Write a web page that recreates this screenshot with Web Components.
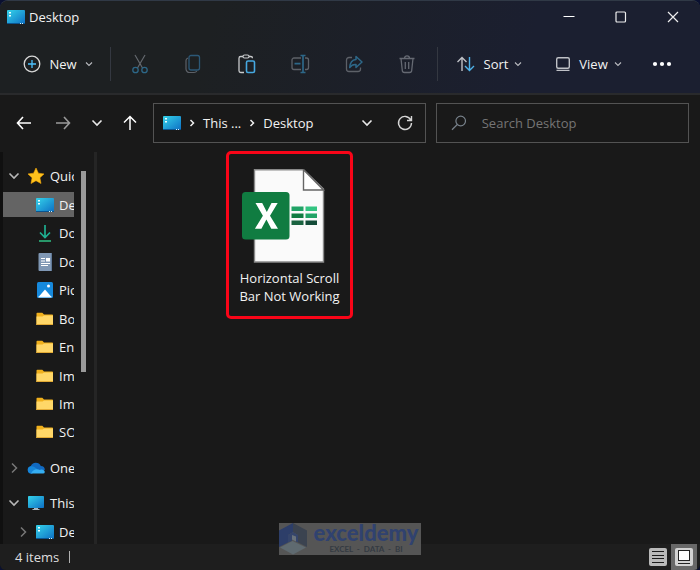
<!DOCTYPE html>
<html lang="en">
<head>
<meta charset="utf-8">
<title>Desktop</title>
<style>
html, body { margin: 0; height: 100%; background: #0a1030; }
body { font: 13px/18px "Open Sans", "Noto Sans", sans-serif; color: #f2f2f2; }
</style>
</head>
<body>
<file-explorer></file-explorer>
<script>
const SCREEN = `<defs><linearGradient id="g" x1="0" y1="0" x2="1" y2="1"><stop offset="0" stop-color="#35d3ea"/><stop offset="1" stop-color="#0d6fc4"/></linearGradient></defs>`;
const ICONS = {
  desktop: [18, 14, SCREEN + `<rect width="18" height="14" rx="1" fill="url(#g)"/><path d="M2 2h2v1.500H2zM2 5h2v1.500H2z" fill="#eaffff"/><path d="M0 13h18v.5a.5.500 0 0 1-.5.500H.5a.5.500 0 0 1-.5-.5z" fill="#0b5590"/><path d="M13 13h1v1h-1zM15 13h1v1h-1z" fill="#d8f4ff"/>`],
  plus: [18, 18, `<circle cx="9" cy="9" r="7.800" stroke="#d8d8d8" stroke-width="1.300"/><path d="M9 5v8M5 9h8" stroke="#4cc2ff" stroke-width="1.300"/>`],
  small: [8, 8, `<path d="M1 2.500l3 3 3-3" stroke="#b9bbc0" stroke-width="1.100"/>`],
  cut: [18, 20, `<path d="M4 1l7.500 13M14 1L6.500 14" stroke="#63676d" stroke-width="1.200"/><circle cx="4.500" cy="16" r="2.700" stroke="#2d6788" stroke-width="1.300"/><circle cx="13.500" cy="16" r="2.700" stroke="#2d6788" stroke-width="1.300"/>`],
  copy: [18, 20, `<path d="M4 4C2.700 4.500 2 5.200 2 6.500V15a3.500 3.500 0 0 0 3.500 3.500H10c1.300 0 2.300-.6 2.800-1.500" stroke="#5d6168" stroke-width="1.200"/><rect x="5" y="1.500" width="10.500" height="14.500" rx="2" stroke="#2c5877" stroke-width="1.300"/>`],
  paste: [18, 20, `<path d="M5 2.500H2.700A1.700 1.700 0 0 0 1 4.200v12.600a1.700 1.700 0 0 0 1.700 1.700H6M11 2.500h1.800a1.700 1.700 0 0 1 1.700 1.700" stroke="#c8cacc" stroke-width="1.300"/><rect x="5" y="1" width="6" height="3" rx="1.500" stroke="#c8cacc" stroke-width="1.200"/><rect x="8.500" y="7" width="8" height="11.500" rx="1.500" stroke="#46a8e0" stroke-width="1.600"/>`],
  rename: [20, 20, `<path d="M11 4H4a2 2 0 0 0-2 2v7.500a2 2 0 0 0 2 2h7M15 4h1.500a2 2 0 0 1 2 2v7.500a2 2 0 0 1-2 2H15" stroke="#5d6168" stroke-width="1.300"/><path d="M4.500 9.700h6M13 2v16.500M10.500 1.500h5M10.500 18.500h5" stroke="#2d6788" stroke-width="1.700"/>`],
  share: [20, 20, `<path d="M8 3.500H5a2.500 2.500 0 0 0-2.500 2.500v9A2.500 2.500 0 0 0 5 17.500h9a2.500 2.500 0 0 0 2.500-2.500v-1.500" stroke="#5d6168" stroke-width="1.300"/><path d="M12 2.500L18 8l-6 5.500v-3c-3-.2-4.800.7-6.300 3C6 9 8.500 5.800 12 5.500z" stroke="#2d6788" stroke-width="1.500" stroke-linejoin="round"/>`],
  trash: [18, 20, `<path d="M1.500 4.500h15M6.500 4.500C6.500 1 11.500 1 11.500 4.500M3 4.500l1.300 12A2.200 2.200 0 0 0 6.500 18.500h5a2.200 2.200 0 0 0 2.200-2L15 4.500M7.300 8v7M10.700 8v7" stroke="#656972" stroke-width="1.300"/>`],
  sort: [20, 16, `<path d="M6 15V1.500M1.500 6L6 1.500 10.500 6" stroke="#bfc1c6" stroke-width="1.400"/><path d="M13.500 1v13.500M9 10l4.500 4.500L18 10" stroke="#4fb3ea" stroke-width="1.400"/>`],
  view: [16, 16, `<rect x="1.700" y="1.700" width="12.600" height="10.600" rx="1.500" stroke="#bfc1c6" stroke-width="1.400"/><path d="M1.500 14.300h13" stroke="#bfc1c6" stroke-width="1.300"/>`],
  more: [20, 6, `<g fill="#fff"><circle cx="3" cy="3" r="2.100"/><circle cx="10" cy="3" r="2.100"/><circle cx="17" cy="3" r="2.100"/></g>`],
  min: [12, 12, `<path d="M.5 5.500h11" stroke="#fff" stroke-width="1.100"/>`],
  max: [12, 12, `<rect x="1" y="1" width="9.500" height="10" rx="1" stroke="#eee" stroke-width="1.200"/>`],
  close: [12, 12, `<path d="M1 1l10 10M11 1L1 11" stroke="#eee" stroke-width="1.200"/>`],
  back: [16, 14, `<path d="M15 7H1.500M7 1L1.500 7 7 13" stroke="#fff" stroke-width="1.600"/>`],
  forward: [16, 14, `<path d="M1 7h13.500M9 1l5.500 6L9 13" stroke="#9a9a9a" stroke-width="1.600"/>`],
  up: [16, 16, `<path d="M8 15V1.500M2 7.500l6-6 6 6" stroke="#fff" stroke-width="1.500"/>`],
  down: [12, 8, `<path d="M1.500 1.500L6 6l4.500-4.500" stroke="#e8e8e8" stroke-width="1.600"/>`],
  right: [6, 8, `<path d="M1.500 1l3 3-3 3" stroke="#f0f0f0" stroke-width="1.500"/>`],
  refresh: [16, 16, `<path d="M13.700 4.800A6.500 6.500 0 1 0 14.500 8M14.500 1v4.500H10" stroke="#d5d5d5" stroke-width="1.400"/>`],
  search: [16, 16, `<circle cx="9.700" cy="6" r="4.800" stroke="#77818a" stroke-width="1.200"/><path d="M6.300 9.500L1 14.700" stroke="#77818a" stroke-width="1.200"/>`],
  open: [12, 8, `<path d="M1.500 1.500L6 6l4.500-4.500" stroke="#b8b8b8" stroke-width="1.600"/>`],
  shut: [12, 12, `<path d="M4 1.500L8.500 6 4 10.500" stroke="#777" stroke-width="1.500"/>`],
  star: [18, 18, `<path d="M9 1l2.400 5.200 5.600.7-4.100 3.900 1.100 5.700L9 13.700 4 16.500l1.100-5.700L1 6.900l5.600-.7z" fill="#ffc21c" stroke="#f5a70a" stroke-width=".6" stroke-linejoin="round"/>`],
  download: [18, 18, `<path d="M9 1v12M4 8.500l5 5 5-5" stroke="#1fae91" stroke-width="1.700"/><path d="M3 17h12" stroke="#2ec184" stroke-width="1.500"/>`],
  document: [18, 18, `<rect x="2.500" width="13.500" height="18" rx="1" fill="#7f97b4"/><path d="M15 0h1v18h-1z" fill="#5f7896"/><path d="M5 5.500h4M5 8h4M5 10.500h9M5 12.500h7" stroke="#fff" stroke-width="1.200"/><rect x="10" y="5" width="4" height="3.500" fill="#fff"/>`],
  picture: [18, 18, `<rect x="1" y="1" width="16" height="16" rx="1.500" fill="#1689dc"/><path d="M2.500 16L9 8.500l6.500 7.500z" fill="#fff"/><path d="M2.500 16h13" stroke="#d7efff"/><circle cx="12.500" cy="5" r="1.500" fill="#fff"/>`],
  folder: [18, 14, `<path d="M.5 1.500a.8.800 0 0 1 .8-.8h5l1.700 1.800h8.200a.8.800 0 0 1 .8.800V13H.5z" fill="#f0b01c"/><path d="M.5 4.500h6L8 3.500h9V12.500a.5.500 0 0 1-.5.500H1a.5.500 0 0 1-.5-.5z" fill="#ffd768"/><path d="M.5 12.500h16.500" stroke="#e2aa35"/>`],
  cloud: [18, 12, `<path d="M4 11.500a3.700 3.700 0 0 1-.3-7.300A5.500 5.500 0 0 1 13.800 4a4 4 0 0 1 4 4z" fill="#1169c0"/><path d="M3.800 4.200c3-.2 4.800 1.700 6.700 3L5 11.500H4a3.700 3.700 0 0 1-.2-7.300z" fill="#1686d9"/><path d="M4 11.500c1.500-3.500 5-5.400 9-3.600 2-1 4.800.2 4.800 2a1.700 1.700 0 0 1-1.700 1.600z" fill="#35aef2"/>`],
  monitor: [18, 14, SCREEN + `<rect x="1" width="16" height="12" rx=".8" fill="url(#g)"/><path d="M7 12h4v1h1.500v1h-7v-1H7z" fill="#a9b6bd"/>`],
  list: [18, 18, `<rect width="18" height="18" rx="2" fill="#b9b9b9"/><path d="M3 3.500h12M3 7.500h12M3 10.500h12M3 14.500h12" stroke="#1b1b1b"/>`],
  tiles: [18, 18, `<rect width="18" height="18" rx="2" fill="#d2d2d2"/><rect x="3.500" y="2.500" width="11" height="10" fill="#fff" stroke="#222"/><path d="M3 15.500h12" stroke="#222"/>`],
  excel: [84, 94, `<path d="M12.500.8h49L81.500 20v73h-69z" fill="#fafafa" stroke="#8a8a8a" stroke-width="1.400"/><path d="M61.500.8V21h20z" fill="#fff" stroke="#666" stroke-width="1.400"/><path fill="#21a366" d="M49.500 37.500h12v4.500h-12zM63.500 44.500H75V49H63.500z"/><path fill="#33c481" d="M63.500 37.500H75V42H63.500z"/><path fill="#107c41" d="M49.500 44.500h12V49h-12z"/><path fill="#1b6340" d="M49.500 51.500h12V56h-12z"/><path fill="#134b38" d="M63.500 51.500H75V56H63.500z"/><rect y="23" width="47.500" height="47.500" rx="3.500" fill="#107c41"/><path d="M13.500 34h6.700l4.600 9 4.700-9h6.200l-7.700 12.700 8 13h-6.700l-4.900-9.200-5 9.200h-6.500l8-13z" fill="#fff"/>`],
  logo: [28, 32, `<path d="M14 0L0 7.500V24l9-4.500V12l5-3z" fill="#2d3e69"/><path d="M14 0l14 7.500V24l-9-4.500V12l-5-3z" fill="#3b4350"/><path d="M14 9l5 3v7.500l-3-1.500v-5h-3v5l-4 1.500V12z" fill="#35456b"/><path d="M13 12l4 1.500v5l-4-2z" fill="#69727b"/><path d="M1 24.500L13.500 18 27 24.500 14 31.500z" fill="#5f6a70"/>`]
};

const define = (name, markup, setup) => {
  const template = document.createElement('template');
  template.innerHTML = markup;
  customElements.define(name, class extends HTMLElement {
    constructor() {
      super();
      this.attachShadow({ mode: 'open' }).append(template.content.cloneNode(true));
    }
    connectedCallback() { if (setup) setup(this, this.shadowRoot); }
  });
};

define('x-icon', `<style>:host{display:inline-flex;flex:none}svg{display:block;fill:none}</style><span></span>`, (el, root) => {
  const [w, h, body] = ICONS[el.getAttribute('name')];
  root.querySelector('span').innerHTML = `<svg width="${w}" height="${h}" viewBox="0 0 ${w} ${h}" aria-hidden="true">${body}</svg>`;
});

define('tool-button', `<style>
:host{display:flex;justify-content:center}
button{all:unset;box-sizing:border-box;width:100%;display:flex;align-items:center;justify-content:center;gap:8px;font:inherit;color:inherit;white-space:nowrap}
button:focus-visible{outline:1px solid #4cc2ff}
</style><button type="button"><slot></slot></button>`, (el, root) => {
  const b = root.querySelector('button');
  if (el.hasAttribute('label')) b.setAttribute('aria-label', el.getAttribute('label'));
  b.disabled = el.hasAttribute('off');
});

define('title-bar', `<style>
:host{display:flex;align-items:center;height:34px;padding:0 1px 0 7px;gap:4px}
h1{font:inherit;margin:0;flex:1}
tool-button{width:52px}
.controls{display:flex}
</style><x-icon name="desktop"></x-icon><h1><slot></slot></h1>
<div class="controls"><tool-button label="Minimize"><x-icon name="min"></x-icon></tool-button><tool-button label="Maximize"><x-icon name="max"></x-icon></tool-button><tool-button label="Close"><x-icon name="close"></x-icon></tool-button></div>`);

define('command-bar', `<style>
:host{display:flex;align-items:center;height:59px;font-weight:500}
.new{width:110px;padding-left:6px;box-sizing:border-box}
.sep{width:1px;height:34px;background:#343841}
.set{flex:1;display:flex;padding:0 3px 0 2px}
.set tool-button{flex:1}
.sort{width:102px}.view{width:97px}.more{width:49px;margin-right:14px}
.sort x-icon + x-icon,.view x-icon + x-icon{margin-left:-2px}
</style>
<tool-button class="new"><x-icon name="plus"></x-icon>New<x-icon name="small"></x-icon></tool-button>
<span class="sep"></span>
<div class="set">
<tool-button off label="Cut"><x-icon name="cut"></x-icon></tool-button>
<tool-button off label="Copy"><x-icon name="copy"></x-icon></tool-button>
<tool-button label="Paste"><x-icon name="paste"></x-icon></tool-button>
<tool-button off label="Rename"><x-icon name="rename"></x-icon></tool-button>
<tool-button off label="Share"><x-icon name="share"></x-icon></tool-button>
<tool-button off label="Delete"><x-icon name="trash"></x-icon></tool-button>
</div><span class="sep"></span>
<tool-button class="sort"><x-icon name="sort"></x-icon>Sort<x-icon name="small"></x-icon></tool-button>
<tool-button class="view"><x-icon name="view"></x-icon>View<x-icon name="small"></x-icon></tool-button>
<tool-button class="more" label="See more"><x-icon name="more"></x-icon></tool-button>`);

define('address-bar', `<style>
:host{display:flex;align-items:center;box-sizing:border-box;height:40px;border:1px solid #535353;padding:0 12px 0 9px}
.path{flex:1;display:flex;align-items:center;gap:8px}
.end{display:flex;gap:24px}
</style>
<nav class="path" aria-label="Path"><x-icon name="desktop"></x-icon><x-icon name="right"></x-icon><tool-button>This ...</tool-button><x-icon name="right"></x-icon><tool-button><slot></slot></tool-button></nav>
<div class="end"><tool-button label="Previous locations"><x-icon name="down"></x-icon></tool-button><tool-button label="Refresh"><x-icon name="refresh"></x-icon></tool-button></div>`);

define('search-box', `<style>
:host{display:flex;align-items:center;box-sizing:border-box;height:40px;border:1px solid #535353;padding:0 14px;gap:15px}
input{all:unset;flex:1;min-width:0;font:inherit;color:#f2f2f2}
input::placeholder{color:#757575;opacity:1}
</style><x-icon name="search"></x-icon><input type="search">`, (el, root) => {
  const i = root.querySelector('input');
  i.placeholder = el.getAttribute('placeholder');
  i.setAttribute('aria-label', i.placeholder);
});

define('nav-bar', `<style>
:host{display:flex;align-items:center;box-sizing:border-box;height:57px;padding:0 11px 2px 16px}
.arrows{display:flex;align-items:center;width:137px}
.b{width:16px;margin-right:23px}.d{width:12px;margin-right:19px;margin-left:-3px}.u{width:16px}
.fields{flex:1;display:grid;grid-template-columns:14fr 13fr;gap:10px}
</style><div class="arrows"><tool-button class="b" label="Back"><x-icon name="back"></x-icon></tool-button><tool-button class="b" label="Forward"><x-icon name="forward"></x-icon></tool-button><tool-button class="d" label="Recent"><x-icon name="down"></x-icon></tool-button><tool-button class="u" label="Up"><x-icon name="up"></x-icon></tool-button></div>
<div class="fields"><address-bar>Desktop</address-bar><search-box placeholder="Search Desktop"></search-box></div>`);

define('tree-row', `<style>
:host{display:flex;flex:1;min-height:0}
:host([selected]) .row{background:#646464}
.row{display:flex;align-items:center;width:100%;margin:2px 0;white-space:nowrap;overflow:hidden}
.arrow{flex:none;width:12px;margin-left:5px;margin-right:7px;display:flex}
:host([level="2"]) .arrow{margin-left:14px}
a{display:flex;align-items:center;gap:5px;color:inherit;text-decoration:none}
.icon{display:flex}
</style><div class="row"><span class="arrow"></span><a href="#"><span class="icon"></span><slot></slot></a></div>`, (el, root) => {
  const icon = (name) => name ? `<x-icon name="${name}"></x-icon>` : '';
  root.querySelector('.arrow').innerHTML = icon(el.getAttribute('state'));
  root.querySelector('.icon').innerHTML = icon(el.getAttribute('icon'));
});

define('nav-tree', `<style>
:host{display:flex;width:94px;flex:none;overflow:hidden;border-right:3px solid #252525}
.edge{width:3px;background:#101010}
nav{width:71px;display:flex;flex-direction:column;padding-top:10px;margin-bottom:-2px;overflow:hidden}
.gap{height:7px;flex:none}
.track{flex:1;padding:19px 8px 0 7px}
.thumb{height:54%;background:#9a9a9a}
</style><div class="edge"></div><nav aria-label="Folders">
<tree-row state="open" icon="star">Quic</tree-row>
<tree-row level="2" icon="desktop" selected>De</tree-row>
<tree-row level="2" icon="download">Do</tree-row>
<tree-row level="2" icon="document">Do</tree-row>
<tree-row level="2" icon="picture">Pic</tree-row>
<tree-row level="2" icon="folder">Bo</tree-row>
<tree-row level="2" icon="folder">En</tree-row>
<tree-row level="2" icon="folder">Im</tree-row>
<tree-row level="2" icon="folder">Im</tree-row>
<tree-row level="2" icon="folder">SO</tree-row>
<div class="gap"></div>
<tree-row state="shut" icon="cloud">One</tree-row>
<div class="gap"></div>
<tree-row state="open" icon="monitor">This</tree-row>
<tree-row level="2" state="shut" icon="desktop">De</tree-row>
</nav><div class="track"><div class="thumb"></div></div>`);

define('file-item', `<style>
:host{display:block;box-sizing:border-box;width:127px;border:3px solid #f90518;border-radius:5px;padding:15px 4px 11px;text-align:center}
button{all:unset;display:flex;flex-direction:column;align-items:center;width:100%;gap:6px}
x-icon{margin-right:12px}
</style><button type="button"><x-icon name="excel"></x-icon><span><slot></slot></span></button>`);

define('status-bar', `<style>
:host{display:flex;align-items:center;height:26px;background:#1e1e1e;padding:0 3px 0 15px}
.count{flex:1;color:#dedede;display:flex;align-items:center;gap:10px}
.count i{width:1px;height:12px;background:#b0b0b0}
.v{width:26px;height:26px}
.on{background:#686868}
</style><div class="count"><slot></slot><i></i></div><tool-button class="v" label="Details view"><x-icon name="list"></x-icon></tool-button><tool-button class="v on" label="Large icons view"><x-icon name="tiles"></x-icon></tool-button>`);

define('brand-mark', `<style>
:host{display:flex;align-items:center;gap:4px;background:#555}
.t{flex:1;text-align:center;color:#30426f;font:900 22px/20px Lato,"Noto Sans",sans-serif}
small{display:block;font:700 8px/12px Lato,sans-serif;color:#343a42;white-space:pre}
</style><x-icon name="logo"></x-icon><div class="t"><slot></slot><small>EXCEL  -  DATA  -  BI</small></div>`);

define('file-explorer', `<style>
:host{display:flex;flex-direction:column;position:relative;box-sizing:border-box;min-height:100vh;background:#191919;border-top:1px solid #303946;border-radius:8px 8px 6px 6px;overflow:hidden}
header{background:linear-gradient(105deg,#1d2022 30%,#1b1f30 75%);border-bottom:2px solid #292a2c;margin-top:-1px}
.body{flex:1;display:flex}
main{flex:1;padding-left:129px;margin-top:-1px}
brand-mark{position:absolute;left:50%;translate:-50% 0;bottom:15px;width:142px}
</style>
<header><title-bar>Desktop</title-bar><command-bar></command-bar></header>
<nav-bar></nav-bar>
<div class="body"><nav-tree></nav-tree><main><file-item>Horizontal Scroll<br>Bar Not Working</file-item></main></div>
<status-bar>4 items</status-bar>
<brand-mark>exceldemy</brand-mark>`);
</script>
</body>
</html>
